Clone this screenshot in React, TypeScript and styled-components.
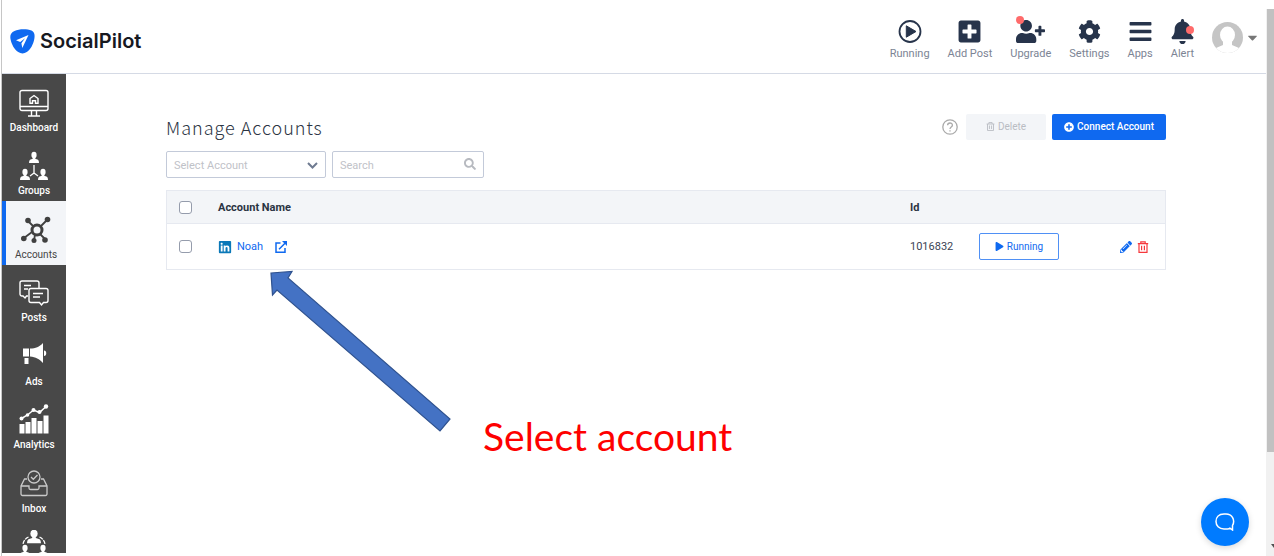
import React from "react";
import styled, { createGlobalStyle, css } from "styled-components";
import {
  FaBars,
  FaBell,
  FaCaretDown,
  FaCog,
  FaLinkedin,
  FaPencilAlt,
  FaPlay,
  FaPlusCircle,
  FaPlusSquare,
  FaSearch,
  FaUserPlus,
} from "react-icons/fa";

const colors = {
  blue: "#0f69f0",
  navy: "#27344b",
  muted: "#7c8494",
  sidebar: "#484848",
  panel: "#f3f5f8",
  line: "#e6e9f0",
  field: "#c3cad9",
  red: "#f5383c",
};

const GlobalStyle = createGlobalStyle`
  *, *::before, *::after { box-sizing: border-box; }
  body { margin: 0; background: #fff; font-family: Roboto, "Liberation Sans", sans-serif; color: #3b4454; }
  button, input, select { font-family: inherit; margin: 0; }
  a { text-decoration: none; color: inherit; }
  svg { display: block; flex: none; }
`;

const Shell = styled.div`
  display: flex;
  position: relative;
  height: 100vh;
  margin-left: 1px;
  border-left: 1px solid #c6c6c6;
  overflow: hidden;
`;

const AppFrame = styled.div`
  flex: 1;
  min-width: 0;
  display: flex;
  flex-direction: column;
`;

const Header = styled.header`
  display: flex;
  justify-content: space-between;
  height: 74px;
  padding: 0 6px 0 8px;
  border-bottom: 1px solid #d5dae5;
`;

const Brand = styled.a`
  display: flex;
  align-items: center;
  gap: 5px;
  padding-top: 9px;
  font-family: Inter, Roboto, sans-serif;
  font-size: 20px;
  font-weight: 600;
  color: #17191f;
`;

const TopNav = styled.nav`
  display: flex;
  align-items: flex-start;
  gap: 18px;
  padding-top: 19px;
`;

const TopLink = styled.a`
  position: relative;
  display: flex;
  flex-direction: column;
  align-items: center;
  gap: 3px;
  font-size: 11px;
  line-height: 14px;
  color: ${colors.muted};
  & > svg { color: ${colors.navy}; height: 25px; }
`;

const Dot = styled.span<{ $side: "left" | "right" }>`
  position: absolute;
  width: 8px;
  height: 8px;
  border-radius: 50%;
  background: #ff6b6b;
  ${(p) => (p.$side === "left" ? css`top: -3px; left: 6px;` : css`top: 7px; right: 0;`)}
`;

const ProfileButton = styled.button`
  display: flex;
  align-items: center;
  gap: 2px;
  height: 36px;
  padding: 0;
  border: 0;
  background: none;
  color: #777;
`;

const Body = styled.div`
  flex: 1;
  min-height: 0;
  display: flex;
  padding-bottom: 3px;
`;

const Sidebar = styled.nav`
  flex: none;
  width: 64px;
  display: grid;
  grid-template-rows: repeat(4, 64px 63px);
  overflow: hidden;
  background: ${colors.sidebar};
`;

const SideLink = styled.a<{ $active?: boolean }>`
  display: flex;
  flex-direction: column;
  align-items: center;
  justify-content: flex-end;
  gap: 3px;
  padding-bottom: 3px;
  font-size: 10px;
  font-weight: 500;
  line-height: 14px;
  color: #fff;
  ${(p) =>
    p.$active &&
    css`
      border-left: 4px solid ${colors.blue};
      background: ${colors.panel};
      color: #444;
      font-weight: 400;
    `}
`;

const Main = styled.main`
  flex: 1;
  min-width: 0;
  padding: 39px 100px 0;
`;

const TitleRow = styled.div`
  display: flex;
  align-items: center;
  justify-content: space-between;
  height: 27px;
`;

const Title = styled.h1`
  margin: 0;
  font-family: "Noto Sans CJK SC", "Noto Sans", sans-serif;
  font-size: 18px;
  font-weight: 300;
  line-height: 26px;
  letter-spacing: 1px;
  color: #2b3443;
`;

const Actions = styled.div`
  display: flex;
  align-items: center;
  gap: 6px;
`;

const HelpButton = styled.button`
  padding: 0;
  margin-right: 2px;
  border: 0;
  background: none;
  color: #aaa;
`;

const Button = styled.button<{ $kind: "muted" | "primary" | "outline" }>`
  display: inline-flex;
  align-items: center;
  justify-content: center;
  gap: 3px;
  height: 26px;
  min-width: 80px;
  padding: 0 11px;
  border: 1px solid transparent;
  border-radius: 2px;
  font-size: 10px;
  ${(p) =>
    p.$kind === "primary"
      ? css`background: ${colors.blue}; color: #fff; font-weight: 500;`
      : p.$kind === "muted"
        ? css`background: ${colors.panel}; color: #b9bcc3;`
        : css`background: #fff; color: ${colors.blue}; border-color: #4f90f5; height: 27px;`}
`;

const Filters = styled.form`
  display: flex;
  gap: 6px;
  padding: 11px 0 12px;
`;

const Field = styled.label<{ $wide?: boolean }>`
  position: relative;
  width: ${(p) => (p.$wide ? 160 : 152)}px;
  svg {
    position: absolute;
    right: 8px;
    top: 7px;
    pointer-events: none;
    color: #b7bac0;
  }
`;

const fieldBox = css`
  display: block;
  width: 100%;
  height: 27px;
  padding: 2px 24px 0 7px;
  border: 1px solid ${colors.field};
  border-radius: 2px;
  background: #fff;
  font-size: 11px;
  color: #bfc2c8;
  outline: none;
`;

const Select = styled.select`
  ${fieldBox}
  appearance: none;
`;

const SearchInput = styled.input`
  ${fieldBox}
  &::placeholder { color: #bfc2c8; }
`;

const Table = styled.table`
  width: 100%;
  table-layout: fixed;
  border-collapse: separate;
  border-spacing: 0;
  border: 1px solid ${colors.line};
  font-size: 11px;
  th, td { padding: 0; text-align: left; vertical-align: middle; }
  th { height: 33px; background: ${colors.panel}; border-bottom: 1px solid ${colors.line}; color: #2a3342; font-weight: 700; }
  td { height: 45px; }
`;

const Col = styled.col<{ $w?: number }>`
  width: ${(p) => (p.$w ? `${p.$w}px` : "auto")};
`;

const Checkbox = styled.input`
  appearance: none;
  display: block;
  width: 13px;
  height: 13px;
  margin-left: 12px;
  border: 1px solid #959cac;
  border-radius: 3px;
  background: #fff;
`;

const AccountCell = styled.div`
  display: flex;
  align-items: center;
  gap: 5px;
  color: ${colors.blue};
  a:last-child { margin-left: 7px; }
`;

const RowActions = styled.div`
  display: flex;
  gap: 5px;
`;

const IconButton = styled.button<{ $danger?: boolean }>`
  padding: 0;
  border: 0;
  background: none;
  color: ${(p) => (p.$danger ? colors.red : colors.blue)};
`;

const ChatButton = styled.button`
  position: absolute;
  right: 25px;
  bottom: 10px;
  display: grid;
  place-items: center;
  width: 48px;
  height: 48px;
  padding: 0;
  border: 0;
  border-radius: 50%;
  background: #007bff;
  box-shadow: 0 2px 6px rgba(0, 0, 0, 0.15);
`;

const ScrollTrack = styled.div`
  flex: none;
  display: flex;
  flex-direction: column;
  justify-content: space-between;
  align-items: flex-end;
  width: 8px;
  margin-top: 9px;
  padding-bottom: 7px;
  overflow: hidden;
  background: #f1f1f1;
`;

const ScrollThumb = styled.div`
  width: 7px;
  height: 82%;
  background: #c1c1c1;
`;

const Arrow = styled.svg`
  position: absolute;
  left: 265px;
  top: 269px;
`;

const Callout = styled.p`
  position: absolute;
  left: 481px;
  top: 412px;
  margin: 0;
  font-family: Lato, sans-serif;
  font-size: 39px;
  line-height: 48px;
  color: #fe0000;
`;

const Logo = () => (
  <svg width="25" height="25" viewBox="0 0 25 25">
    <path d="M4.500 2C9-.3 17-.3 21.500 1.500 24.500 2.800 25 6 24.300 10c-1 5.500-3.800 10.500-7.500 13-2.800 1.900-5.800 1.900-8.600 0C4.500 20.500 1.500 15.500.5 10-.2 6 1 3.500 4.500 2Z" fill="#0f69f0" />
    <path d="M18.500 6 6 11.200l4.200 1.900L15 9.300l-3.600 4.900.9 4.800L18.500 6Z" fill="#fff" />
  </svg>
);

const PlayCircle = () => (
  <svg width="24" height="24" viewBox="0 0 24 24">
    <circle cx="12" cy="12" r="10.500" fill="none" stroke="currentColor" strokeWidth="1.800" />
    <path d="M8.300 6.300 18 12l-9.700 5.700Z" fill="currentColor" stroke="currentColor" strokeLinejoin="round" />
  </svg>
);

const Avatar = () => (
  <svg width="31" height="31" viewBox="0 0 31 31">
    <clipPath id="avatar-clip"><circle cx="15.500" cy="15.500" r="15.500" /></clipPath>
    <g clipPath="url(#avatar-clip)">
      <rect width="31" height="31" fill="#c5c5c5" />
      <ellipse cx="15.500" cy="13" rx="7.500" ry="8.500" fill="#fff" />
      <path d="M11 19h9v4l7 3v6H4v-6l7-3Z" fill="#fff" />
    </g>
  </svg>
);

const outline = { fill: "none", stroke: "currentColor", strokeWidth: 1.4 };

const DashboardIcon = () => (
  <svg width="30" height="29" viewBox="0 0 30 29" {...outline}>
    <rect x="1" y="1.500" width="28" height="20" rx="2" />
    <path d="M1 17.500h28M12.500 21.500v5M17.500 21.500v5M9 27h12" />
    <path d="M11 9.500 15 6.500l4 3v4.800h-2.500v-2.500h-3v2.500H11Z" />
  </svg>
);

const Person = ({ x, y }: { x: number; y: number }) => (
  <g transform={`translate(${x} ${y})`}>
    <ellipse cx="5" cy="3" rx="2.600" ry="3.200" />
    <path d="M3.700 4.500h2.600v2.200L9 7.800q1 .7 1 3.200H0q0-2.500 1-3.200l2.700-1.100Z" />
  </g>
);

const GroupsIcon = () => (
  <svg width="28" height="30" viewBox="0 0 28 30" fill="currentColor">
    <Person x={9} y={1} />
    <Person x={0} y={18} />
    <Person x={18} y={18} />
    <path d="M14 14v8M14 22l-4 3M14 22l4 3" stroke="currentColor" strokeWidth="1.300" fill="none" />
  </svg>
);

const AccountsIcon = () => (
  <svg width="30" height="30" viewBox="0 0 30 30" fill="#404040" stroke="#404040">
    <circle cx="16" cy="15" r="5" fill="none" strokeWidth="3" />
    <path d="M12 11 7 6M20 11l6-6M11 17l-8 6M14 20l-1 5M19 19l5 5" strokeWidth="1.800" />
    <g stroke="none">
      <circle cx="7" cy="5.500" r="2.800" />
      <circle cx="26.500" cy="4.500" r="2.800" />
      <circle cx="2.800" cy="23.500" r="2.800" />
      <circle cx="13" cy="25.500" r="2.500" />
      <circle cx="24" cy="25" r="2.800" />
    </g>
  </svg>
);

const PostsIcon = () => (
  <svg width="30" height="29" viewBox="0 1 30 29" {...outline}>
    <path d="M9 18H7.500L6 20l-2-2H3a2 2 0 0 1-2-2V5a2 2 0 0 1 2-2h15a2 2 0 0 1 2 2v5" />
    <path d="M12 10.500h15a2 2 0 0 1 2 2v10a2 2 0 0 1-2 2h-2.500L22.500 27l-2-2.500H12a2 2 0 0 1-2-2v-10a2 2 0 0 1 2-2Z" />
    <path d="M5 7.500h7M5 11h4M14 15.500h10M14 19h7" />
  </svg>
);

const AdsIcon = () => (
  <svg width="26" height="33" viewBox="0 0 26 33" fill="currentColor">
    <path d="M2 9.500h6v8H2ZM3.500 19H7.500v6H3.500ZM9 9.500c6 0 9-1.500 13-5.500v20c-4-4-7-6-13-6.500ZM23 11.500c3 0 3 5.500 0 5.500Z" />
  </svg>
);

const AnalyticsIcon = () => (
  <svg width="30" height="32" viewBox="0 0 30 32" fill="currentColor">
    <path d="M.5 21h5v9.500h-5ZM6.500 19h5v11.500h-5ZM12.500 15h5v15.500h-5ZM18.500 18h5v12.500h-5ZM24.500 12.500h5v18h-5Z" />
    <path d="m2.500 15.500 6-3.500 6-5 6 2.500L27 3.500" fill="none" stroke="currentColor" strokeWidth="1.500" />
    <circle cx="2.500" cy="15.500" r="2" />
    <circle cx="8.500" cy="12" r="1.800" />
    <circle cx="14.500" cy="7" r="2" />
    <circle cx="20.500" cy="9" r="2" />
    <circle cx="27" cy="3.500" r="2.200" />
  </svg>
);

const InboxIcon = () => (
  <svg width="28" height="30" viewBox="0 0 28 30" fill="none" stroke="#c9c9c9" strokeWidth="1.300">
    <circle cx="14" cy="8" r="6" />
    <path d="m11 8 2.300 2.300L17.500 6" />
    <path d="M7 10H4.500L1 17v8a1.500 1.500 0 0 0 1.500 1.500h23A1.500 1.500 0 0 0 27 25v-8l-3.500-7H21M1 17h8v2q0 1.500 1.500 1.500h7Q19 20.500 19 19v-2h8" />
  </svg>
);

const TeamIcon = () => (
  <svg width="28" height="49" viewBox="0 0 28 49" fill="currentColor">
    <g transform="translate(7 0) scale(1.400 1.200)"><Person x={0} y={0} /></g>
    <path d="M8.500 7Q4 9 3 14M19.500 7q4.500 2 5.500 7" fill="none" stroke="currentColor" strokeWidth="1.300" strokeDasharray="4 1" />
    <Person x={0} y={15} />
    <Person x={18} y={15} />
  </svg>
);

const TrashIcon = ({ size }: { size: number }) => (
  <svg width={size} height={size} viewBox="0 0 12 12" fill="none" stroke="currentColor" strokeWidth="1.200">
    <path d="M.8 2.700h10.400M3.800 2.500V.8h4.400v1.700M2 2.700v8.600h8V2.700M4.600 4.700v4.600M7.400 4.700v4.600" />
  </svg>
);

const HelpIcon = () => (
  <svg width="16" height="16" viewBox="0 0 16 16" fill="none" stroke="currentColor" strokeWidth="1.300">
    <circle cx="8" cy="8" r="7.200" />
    <path d="M5.600 6.300C5.600 3.200 10.400 3.300 10.400 6.200 10.400 8 8 8 8 9.900M8 11.200v1.400" />
  </svg>
);

const ExternalIcon = () => (
  <svg width="12" height="12" viewBox="0 0 12 12" fill="none" stroke="currentColor" strokeWidth="1.500">
    <path d="M5.500 2H1v9.200h9V7M4 8.200l6-6" />
    <path d="M7 0h5v5Z" fill="currentColor" stroke="none" />
  </svg>
);

const ChevronIcon = () => (
  <svg width="11" height="12" viewBox="0 0 11 12" fill="none" stroke="#6f7b91" strokeWidth="2">
    <path d="m1 5 4.500 4.500L10 5" />
  </svg>
);

const ChatIcon = () => (
  <svg width="20" height="18" viewBox="0 0 20 18" fill="none" stroke="#fff" strokeWidth="1.500">
    <path d="M17.500 17V12.500C20.500 7 17 1 11 1H9C3.500 1 1 4.500 1 8.500s3 7.500 8 7.500h3.500q1.500 0 2.500-.8Z" />
  </svg>
);

const sideItems = [
  { label: "Dashboard", icon: <DashboardIcon /> },
  { label: "Groups", icon: <GroupsIcon /> },
  { label: "Accounts", icon: <AccountsIcon />, active: true },
  { label: "Posts", icon: <PostsIcon /> },
  { label: "Ads", icon: <AdsIcon /> },
  { label: "Analytics", icon: <AnalyticsIcon /> },
  { label: "Inbox", icon: <InboxIcon /> },
  { label: "", icon: <TeamIcon /> },
];

const topItems: { label: string; icon: React.ReactNode; dot?: "left" | "right" }[] = [
  { label: "Running", icon: <PlayCircle /> },
  { label: "Add Post", icon: <FaPlusSquare size={23} /> },
  { label: "Upgrade", icon: <FaUserPlus size={29} />, dot: "left" },
  { label: "Settings", icon: <FaCog size={23} /> },
  { label: "Apps", icon: <FaBars size={23} /> },
  { label: "Alert", icon: <FaBell size={23} />, dot: "right" },
];

export default function App() {
  return (
    <>
      <GlobalStyle />
      <Shell>
        <AppFrame>
          <Header>
            <Brand href="#"><Logo />SocialPilot</Brand>
            <TopNav>
              {topItems.map((item) => (
                <TopLink href="#" key={item.label}>
                  {item.icon}
                  {item.dot && <Dot $side={item.dot} />}
                  {item.label}
                </TopLink>
              ))}
              <ProfileButton aria-label="Profile"><Avatar /><FaCaretDown size={15} /></ProfileButton>
            </TopNav>
          </Header>
          <Body>
            <Sidebar>
              {sideItems.map((item, i) => (
                <SideLink href="#" key={i} $active={item.active} aria-label={item.label || "Team"}>
                  {item.icon}
                  {item.label}
                </SideLink>
              ))}
            </Sidebar>
            <Main>
              <TitleRow>
                <Title>Manage Accounts</Title>
                <Actions>
                  <HelpButton aria-label="Help"><HelpIcon /></HelpButton>
                  <Button $kind="muted" disabled><TrashIcon size={9} />Delete</Button>
                  <Button $kind="primary"><FaPlusCircle size={10} />Connect Account</Button>
                </Actions>
              </TitleRow>
              <Filters>
                <Field $wide>
                  <Select aria-label="Account"><option>Select Account</option></Select>
                  <ChevronIcon />
                </Field>
                <Field>
                  <SearchInput type="text" placeholder="Search" aria-label="Search" />
                  <FaSearch size={12} />
                </Field>
              </Filters>
              <Table>
                <colgroup>
                  <Col $w={51} /><Col /><Col $w={69} /><Col $w={141} /><Col $w={45} />
                </colgroup>
                <thead>
                  <tr>
                    <th><Checkbox type="checkbox" aria-label="Select all accounts" /></th>
                    <th>Account Name</th>
                    <th>Id</th>
                    <th />
                    <th />
                  </tr>
                </thead>
                <tbody>
                  <tr>
                    <td><Checkbox type="checkbox" aria-label="Select Noah" /></td>
                    <td>
                      <AccountCell>
                        <FaLinkedin size={14} color="#0a78b8" />
                        <a href="#">Noah</a>
                        <a href="#" aria-label="Open profile"><ExternalIcon /></a>
                      </AccountCell>
                    </td>
                    <td>1016832</td>
                    <td><Button $kind="outline"><FaPlay size={9} />Running</Button></td>
                    <td>
                      <RowActions>
                        <IconButton aria-label="Edit"><FaPencilAlt size={12} /></IconButton>
                        <IconButton $danger aria-label="Delete account"><TrashIcon size={12} /></IconButton>
                      </RowActions>
                    </td>
                  </tr>
                </tbody>
              </Table>
            </Main>
          </Body>
        </AppFrame>
        <ScrollTrack>
          <ScrollThumb />
          <svg width="3" height="5" viewBox="0 0 3 5"><path d="M0 0h3v4Z" fill="#505050" /></svg>
        </ScrollTrack>
        <Arrow width="186" height="166" viewBox="0 0 186 166">
          <path d="M4 4 25 2.500 21 9l162 141-10 12L10 21 5.500 26Z" fill="#4472c4" stroke="#2f528f" strokeWidth="1.200" />
        </Arrow>
        <Callout>Select account</Callout>
        <ChatButton aria-label="Open chat"><ChatIcon /></ChatButton>
      </Shell>
    </>
  );
}
